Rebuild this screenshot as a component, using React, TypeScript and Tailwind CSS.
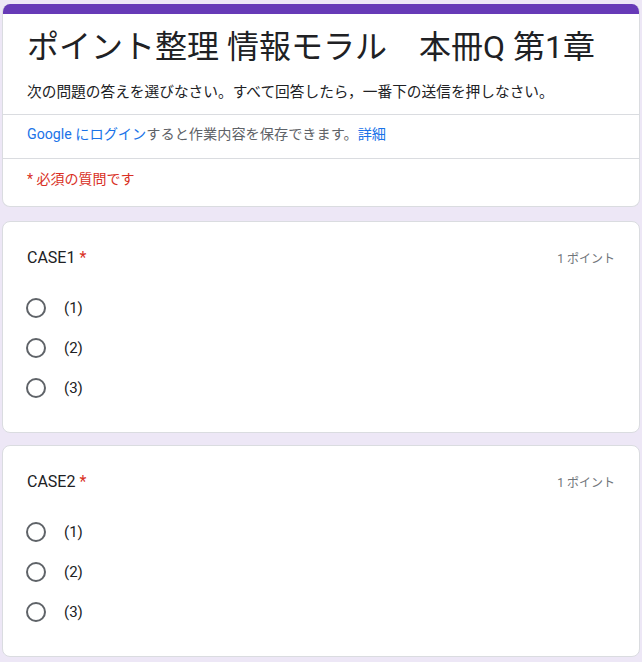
const font = { fontFamily: 'Roboto, "Noto Sans CJK JP", sans-serif' };

function Radio({ label }: { label: string }) {
  return (
    <label className="flex h-10 items-center">
      <span className="-ml-[1px] h-5 w-5 rounded-full border-2 border-[#5f6368]" />
      <span className="ml-[18px] text-[15px] text-[#202124]">{label}</span>
    </label>
  );
}

function Question({ title }: { title: string }) {
  return (
    <section className="mx-[2px] rounded-lg border border-[#dadce0] bg-white px-6 pt-6 pb-6">
      <div className="flex items-center justify-between">
        <h2 className="text-[16px] leading-6 text-[#202124]">
          {title} <span className="text-[#d93025]">*</span>
        </h2>
        <span className="mt-[1px] text-[12px] text-[#70757a]">1 ポイント</span>
      </div>
      <div className="mt-[18px]">
        <Radio label="(1)" />
        <Radio label="(2)" />
        <Radio label="(3)" />
      </div>
    </section>
  );
}

export default function App() {
  return (
    <div className="min-h-screen bg-[#ede7f6] pt-1" style={font}>
      <div className="flex flex-col gap-3">
        <header className="mx-[2px] mb-[2px] overflow-hidden rounded-lg border border-[#dadce0] border-t-0 bg-white">
          <div className="h-[10px] bg-[#673ab7]" />
          <div className="px-6 pt-[13px] pb-3">
            <h1 className="text-[32px] leading-10 text-[#202124]">
              ポイント整理 情報モラル　本冊Q 第1章
            </h1>
            <p className="mt-[15px] text-[14.7px] leading-5 text-[#202124]">
              次の問題の答えを選びなさい。すべて回答したら，一番下の送信を押しなさい。
            </p>
          </div>
          <div className="border-t border-[#dadce0] px-6 pt-[9px] pb-[14px] text-[14.2px] leading-5">
            <span className="text-[#1a73e8]">Google にログイン</span>
            <span className="text-[#5f6368]">すると作業内容を保存できます。</span>
            <span className="text-[#1a73e8]">詳細</span>
          </div>
          <div className="border-t border-[#dadce0] px-6 pt-[10px] pb-[17px] text-[14px] leading-5 text-[#d93025]">
            * 必須の質問です
          </div>
        </header>
        <Question title="CASE1" />
        <Question title="CASE2" />
      </div>
    </div>
  );
}
